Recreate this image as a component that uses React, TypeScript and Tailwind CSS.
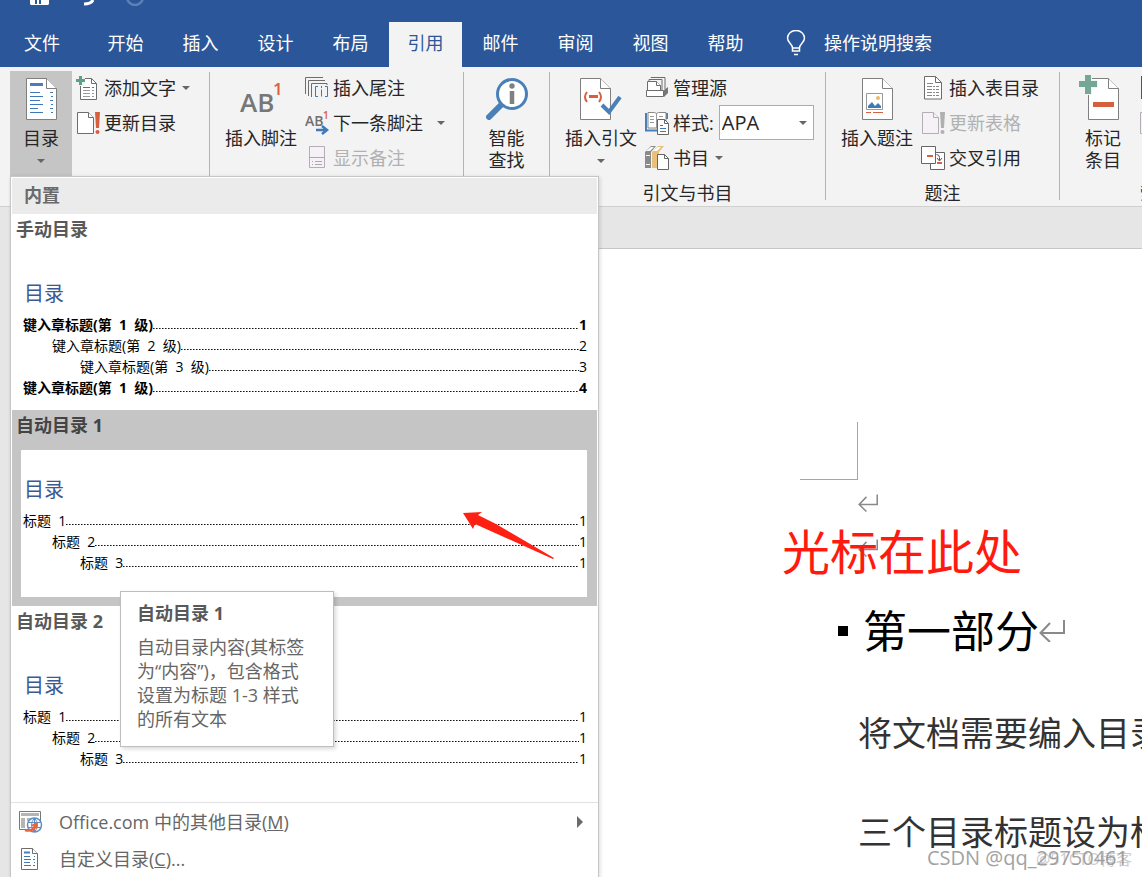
import type { ReactNode } from 'react';

const TABS = ['开始', '插入', '设计', '布局', '引用', '邮件', '审阅', '视图', '帮助'];

interface TocLine {
  text: string;
  page: number;
  level: number;
  bold?: boolean;
}

const MANUAL_LINES: TocLine[] = [
  { text: '键入章标题(第  1  级)', page: 1, level: 0, bold: true },
  { text: '键入章标题(第  2  级)', page: 2, level: 1 },
  { text: '键入章标题(第  3  级)', page: 3, level: 2 },
  { text: '键入章标题(第  1  级)', page: 4, level: 0, bold: true },
];

const AUTO_LINES: TocLine[] = [
  { text: '标题  1', page: 1, level: 0 },
  { text: '标题  2', page: 1, level: 1 },
  { text: '标题  3', page: 1, level: 2 },
];

const INDENTS = ['pl-0', 'pl-[29px]', 'pl-[57px]'];

function Caret() {
  return (
    <svg width="8" height="4" viewBox="0 0 8 4" className="shrink-0" aria-hidden="true">
      <path d="M0 0h8L4 4z" fill="#666" />
    </svg>
  );
}

function BigPage() {
  return (
    <g stroke="#7f7f7f" fill="#fff">
      <path d="M.5.5h20l10 10v31H.5z" />
      <path d="M20.5.5v10h10" />
    </g>
  );
}

function SmallPage({ muted = false }: { muted?: boolean }) {
  return (
    <g stroke={muted ? '#b5adb5' : '#6d6d6d'} fill={muted ? '#f6f1f7' : '#fff'}>
      <path d="M.5.5h11l5 5v16H.5z" />
      <path d="M11.5.5v5h5" />
    </g>
  );
}

function TocIcon() {
  return (
    <svg width="31" height="42" viewBox="0 0 31 42" aria-hidden="true">
      <BigPage />
      <path d="M4 6.500h13" stroke="#4a7ebb" strokeWidth="3" />
      <path
        d="M4 14.500h10M4 18.500h13M4 22.500h10M4 26.500h13M4 30.500h8M4 34.500h13M24 14.500h3M25 18.500h2M24 22.500h3M25 26.500h2M24 30.500h3M25 34.500h2"
        stroke="#3f78b5"
      />
    </svg>
  );
}

function FootnoteIcon() {
  return (
    <svg width="42" height="42" viewBox="0 0 42 42" aria-hidden="true" className="font-['Open_Sans',sans-serif]">
      <text x="0" y="34" fontSize="26" fontWeight="600" fill="#777">AB</text>
      <text x="33" y="17" fontSize="17" fontWeight="600" fill="#d9603f">1</text>
    </svg>
  );
}

function LookupIcon() {
  return (
    <svg width="42" height="42" viewBox="0 0 42 42" aria-hidden="true">
      <path d="M15 27L3 39" stroke="#4a80b8" strokeWidth="6" strokeLinecap="round" />
      <circle cx="26" cy="16" r="14.500" fill="#fff" stroke="#4a80b8" strokeWidth="3" />
      <circle cx="26" cy="8" r="2.700" fill="#808080" />
      <path d="M26 13v13" stroke="#808080" strokeWidth="4.500" />
    </svg>
  );
}

function CitationIcon() {
  return (
    <svg width="42" height="42" viewBox="0 0 42 42" aria-hidden="true">
      <BigPage />
      <path d="M7 14q-4 5 0 10M19 14q4 5 0 10" fill="none" stroke="#d65f3e" strokeWidth="2" />
      <path d="M9 18.500h9" stroke="#d65f3e" strokeWidth="3" />
      <path d="M22 27l7 7L40 19" fill="none" stroke="#4a80b8" strokeWidth="4" />
    </svg>
  );
}

function CaptionIcon() {
  return (
    <svg width="31" height="42" viewBox="0 0 31 42" aria-hidden="true">
      <BigPage />
      <path d="M4.500 15.500h16v16h-16z" fill="#fff" stroke="#999" />
      <path d="M6 30v-2l4-4 3 4 3-3 3 3v2z" fill="#3f7ab5" />
      <circle cx="16" cy="20" r="2" fill="#e8bd6b" />
      <path d="M4 34.500h5M11 34.500h10" stroke="#d65f3e" />
    </svg>
  );
}

function MarkEntryIcon() {
  return (
    <svg width="31" height="42" viewBox="0 0 31 42" className="overflow-visible" aria-hidden="true">
      <BigPage />
      <path d="M-9 6h19M0-3v20" stroke="#f3f3f3" strokeWidth="8" />
      <path d="M-9 6H9M0-3v19" stroke="#74a796" strokeWidth="6" />
      <path d="M5 26.500h21" stroke="#d65f3e" strokeWidth="5" />
    </svg>
  );
}

function SmallIcon({ children }: { children: ReactNode }) {
  return (
    <svg width="24" height="24" viewBox="0 0 24 24" fill="none" className="shrink-0" aria-hidden="true">
      {children}
    </svg>
  );
}

const addTextIcon = (
  <SmallIcon>
    <path d="M4.500 2.500h11l5 5v16h-16z" fill="#fff" stroke="#6d6d6d" />
    <path d="M15.500 2.500v5h5" stroke="#6d6d6d" />
    <path d="M0 0h9v10H0z" fill="#f3f3f3" />
    <path d="M0 4.500h9M4.500 0v9" stroke="#5f9f88" strokeWidth="3" />
    <path d="M7 11.500h7M16 11.500h2" stroke="#3f78b5" />
    <path d="M7 14.500h7M16 14.500h2M7 17.500h7M16 17.500h2M7 20.500h7M16 20.500h2" stroke="#9a9a9a" />
  </SmallIcon>
);

const updateIcon = (muted: boolean) => (
  <SmallIcon>
    <g transform="translate(1 1)">
      <SmallPage muted={muted} />
      <path d="M18 0h5l-1 16h-3z" fill={muted ? '#b0b0b0' : '#d65f3e'} />
      <circle cx="20.500" cy="20" r="2" fill={muted ? '#b0b0b0' : '#d65f3e'} />
    </g>
  </SmallIcon>
);

const endnoteIcon = (
  <SmallIcon>
    <path d="M.5 18V1.500H18M3.500 20V4.500H20M6.500 21V7.500H22V9" stroke="#6d6d6d" />
    <path d="M13 10.500h-2.500v10H13M20 10.500h2.500v10H20M16.500 13.500v7" stroke="#3f78b5" />
    <path d="M16.500 10v2" stroke="#3f78b5" />
  </SmallIcon>
);

const nextFootnoteIcon = (
  <SmallIcon>
    <g className="font-['Open_Sans',sans-serif]">
      <text x="0" y="15" fontSize="14" fontWeight="600" fill="#707070">AB</text>
      <text x="18" y="8" fontSize="10" fontWeight="600" fill="#d65f3e">1</text>
    </g>
    <path d="M11 19h10M17 15l5 4-5 4" stroke="#3f7ab8" strokeWidth="2.500" />
  </SmallIcon>
);

const showNotesIcon = (
  <SmallIcon>
    <path d="M4.500.5h15v21h-15z" fill="#f6f1f7" stroke="#b5adb5" />
    <path d="M4 11.500h16M7 15.500h1M10 15.500h7M7 18.500h1M10 18.500h7" stroke="#aaa" />
  </SmallIcon>
);

const manageIcon = (
  <SmallIcon>
    <path d="M6 2V1.500h14V13M4 5V3.500h13V14" stroke="#6d6d6d" />
    <path d="M2.500 14V5.500h9l4 4V14" fill="#fff" stroke="#6d6d6d" />
    <path d="M11.500 5.500v4h4M1.500 14.500h17v6h-17z" fill="#fff" stroke="#6d6d6d" />
    <path d="M19 14l4-3v6l-4 4z" fill="#777" />
  </SmallIcon>
);

const styleIcon = (
  <SmallIcon>
    <path d="M1 2v17.500H12M22 2v6" stroke="#4a80b8" strokeWidth="2" />
    <path d="M3 1.500h6.500l2 1 2-1H21V17H3z" fill="#fff" stroke="#888" />
    <path d="M11.500 2v15M5 5.500h4M5 8.500h4M5 11.500h4M14 5.500h4" stroke="#999" />
    <path d="M12.500 8.500h7l4 4v11h-11z" fill="#fff" stroke="#666" />
    <path d="M19.500 8.500v4h4" stroke="#666" />
    <path d="M15 14.500h3M15 17.500h6M15 20.500h6" stroke="#3f78b5" />
  </SmallIcon>
);

const bibliographyIcon = (
  <SmallIcon>
    <path d="M0 6l6-6h5L6 6v16H0z" fill="#8a8a8a" />
    <path d="M1 5l5-4h3L5 5zM1 9h4v1H1zM1 18h4v1H1z" fill="#fff" />
    <path d="M7 6l6-6h6l-5 6v16H7z" fill="#e8c07a" />
    <path d="M8 5l5-4h3l-4 4z" fill="#fff" />
    <path d="M12.500 8.500h7l4 4v11h-11z" fill="#fff" stroke="#666" />
    <path d="M19.500 8.500v4h4" stroke="#666" />
  </SmallIcon>
);

const figureTableIcon = (
  <SmallIcon>
    <g transform="translate(3 0)">
      <path d="M.5.5h11l6 6v16.500H.5z" fill="#fff" stroke="#6d6d6d" />
      <path d="M11.500.5v6h6" stroke="#6d6d6d" />
      <path d="M3 7.500h6" stroke="#888" />
      <path d="M3 10.500h12M3 13.500h12M3 16.500h12M3 19.500h12" stroke="#888" strokeDasharray="5 1 2 1" />
    </g>
  </SmallIcon>
);

const crossRefIcon = (
  <SmallIcon>
    <path d="M9.500 6.500h14v17h-14z" fill="#fff" stroke="#666" />
    <path d="M.5.500h14v17H.5z" fill="#fff" stroke="#666" />
    <path d="M6 10h6M16 17h5" stroke="#d65f3e" strokeWidth="2" />
    <path d="M15.500 8.500q3 0 3 3v3M16 12l2.500 3 2.500-3" stroke="#555" />
  </SmallIcon>
);

const indexIcon = (
  <SmallIcon>
    <path d="M2 0h20v23H2z" fill="#fff" />
    <path d="M2.500 0v23" stroke="#555" />
  </SmallIcon>
);

interface BigButtonProps {
  icon: ReactNode;
  lines: string[];
  arrow?: boolean;
  active?: boolean;
  narrow?: boolean;
}

function BigButton({ icon, lines, arrow, active, narrow }: BigButtonProps) {
  return (
    <button
      type="button"
      className={`flex h-full shrink-0 flex-col items-center pt-[7px] ${narrow ? 'w-[62px]' : 'w-[74px]'} ${
        active ? 'bg-[#c5c5c5]' : ''
      }`}
    >
      {icon}
      <span className="mt-[7px] flex flex-col whitespace-nowrap leading-[22px]">
        {lines.map((line) => (
          <span key={line}>{line}</span>
        ))}
      </span>
      {arrow && (
        <span className="mt-[10px]">
          <Caret />
        </span>
      )}
    </button>
  );
}

function ButtonStack({ children }: { children: ReactNode }) {
  return <div className="-mt-px flex flex-col">{children}</div>;
}

interface SmallButtonProps {
  icon: ReactNode;
  label?: string;
  arrow?: 'near' | 'far';
  disabled?: boolean;
}

function SmallButton({ icon, label, arrow, disabled }: SmallButtonProps) {
  return (
    <button
      type="button"
      disabled={disabled}
      className="flex h-[35px] items-center gap-1 whitespace-nowrap disabled:text-[#b1b1b1]"
    >
      {icon}
      {label && <span>{label}</span>}
      {arrow && (
        <span className={arrow === 'far' ? 'ml-[10px]' : 'ml-[2px]'}>
          <Caret />
        </span>
      )}
    </button>
  );
}

interface GroupProps {
  children: ReactNode;
  label?: string;
  className: string;
}

function Group({ children, label, className }: GroupProps) {
  return (
    <section className="flex shrink-0">
      <div className={`flex flex-col ${className}`}>
        <div className="flex h-[105px]">{children}</div>
        {label && <h2 className="mt-[5px] text-center leading-6">{label}</h2>}
      </div>
      <div className="mt-px mb-[6px] w-px bg-[#b4b4b4]" />
    </section>
  );
}

function TitleBar() {
  return (
    <header className="shrink-0 bg-[#2b579a] text-white">
      <div className="h-[22px] pl-[30px]">
        <svg width="120" height="6" viewBox="0 0 120 6" fill="none" aria-hidden="true">
          <path d="M0 0h5v4h2V0h2v4h2V0h8v4l-1 1H1L0 4z" fill="#fff" />
          <path d="M63 0q-2 4-9 4" stroke="#fff" strokeWidth="3" />
          <path d="M97-3a8 8 0 0 0 16 0" stroke="#5d80b6" strokeWidth="2.500" />
        </svg>
      </div>
      <nav className="flex h-[45px] gap-[2px] whitespace-nowrap pl-[5px]">
        <button type="button" className="w-[74px] pb-[3px]">文件</button>
        <div className="ml-2 flex gap-[2px]">
          {TABS.map((tab) => (
            <button
              key={tab}
              type="button"
              className={`w-[73px] pb-[3px] ${tab === '引用' ? 'bg-[#f3f3f3] text-[#2b579a]' : ''}`}
            >
              {tab}
            </button>
          ))}
        </div>
        <button type="button" className="ml-[22px] flex items-center gap-[18px] pb-[3px]">
          <svg width="20" height="26" viewBox="0 0 20 26" fill="none" stroke="#fff" strokeWidth="1.500" aria-hidden="true">
            <path d="M6.500 18c0-4-5-5-5-10a8.500 7.500 0 0 1 17 0c0 5-5 6-5 10zM6.500 18v3h7v-3M8 24.500h4" />
          </svg>
          <span>操作说明搜索</span>
        </button>
      </nav>
    </header>
  );
}

function Ribbon() {
  return (
    <div className="flex h-[140px] shrink-0 overflow-hidden border-b border-[#d0d0d0] bg-[#f3f3f3] pt-1 text-[#262626]">
      <Group className="w-[209px] pl-[10px]">
        <BigButton icon={<TocIcon />} lines={['目录']} arrow active narrow />
        <div className="ml-1">
          <ButtonStack>
            <SmallButton icon={addTextIcon} label="添加文字" arrow="near" />
            <SmallButton icon={updateIcon(false)} label="更新目录" />
          </ButtonStack>
        </div>
      </Group>
      <Group className="w-[253px] pl-[14px]">
        <BigButton icon={<FootnoteIcon />} lines={['插入脚注']} />
        <div className="ml-[7px]">
          <ButtonStack>
            <SmallButton icon={endnoteIcon} label="插入尾注" />
            <SmallButton icon={nextFootnoteIcon} label="下一条脚注" arrow="far" />
            <SmallButton icon={showNotesIcon} label="显示备注" disabled />
          </ButtonStack>
        </div>
      </Group>
      <Group className="w-[85px] items-center">
        <BigButton icon={<LookupIcon />} lines={['智能', '查找']} />
      </Group>
      <Group className="w-[275px]" label="引文与书目">
        <div className="flex pl-[14px]">
          <BigButton icon={<CitationIcon />} lines={['插入引文']} arrow />
          <div className="ml-[7px]">
            <ButtonStack>
              <SmallButton icon={manageIcon} label="管理源" />
              <div className="flex h-[35px] items-center gap-1">
                {styleIcon}
                <label htmlFor="citation-style">样式:</label>
                <span className="relative ml-px">
                  <select
                    id="citation-style"
                    defaultValue="APA"
                    className="block h-[35px] w-[95px] appearance-none border border-[#ababab] bg-white pl-[2px] text-xl text-[#262626]"
                  >
                    <option>APA</option>
                  </select>
                  <span className="pointer-events-none absolute inset-y-0 right-[7px] flex items-center">
                    <Caret />
                  </span>
                </span>
              </div>
              <SmallButton icon={bibliographyIcon} label="书目" arrow="near" />
            </ButtonStack>
          </div>
        </div>
      </Group>
      <Group className="w-[233px]" label="题注">
        <div className="flex pl-[14px]">
          <BigButton icon={<CaptionIcon />} lines={['插入题注']} />
          <div className="ml-[7px]">
            <ButtonStack>
              <SmallButton icon={figureTableIcon} label="插入表目录" />
              <SmallButton icon={updateIcon(true)} label="更新表格" disabled />
              <SmallButton icon={crossRefIcon} label="交叉引用" />
            </ButtonStack>
          </div>
        </div>
      </Group>
      <Group className="w-[196px]" label="索引">
        <div className="flex pl-3">
          <BigButton icon={<MarkEntryIcon />} lines={['标记', '条目']} narrow />
          <div className="ml-[5px]">
            <ButtonStack>
              <SmallButton icon={indexIcon} />
              <SmallButton icon={updateIcon(true)} disabled />
            </ButtonStack>
          </div>
        </div>
      </Group>
    </div>
  );
}

function GalleryItem({ name, lines, selected }: { name: string; lines: TocLine[]; selected?: boolean }) {
  return (
    <button
      type="button"
      className={`flex h-[196px] w-full flex-col pr-[10px] pb-[9px] pl-1 text-left ${
        selected ? 'bg-[#c5c5c5] text-[#444]' : 'text-[#595959]'
      }`}
    >
      <span className="flex h-10 pt-[3px] font-bold leading-6">{name}</span>
      <span className="flex w-full grow flex-col pl-[5px]">
        <span className="flex grow flex-col bg-white pl-[2px] pt-7 text-black">
          <span className="ml-px text-xl leading-6 text-[#3b5a92]">目录</span>
          <span className="mt-2 flex flex-col">
            {lines.map((line, i) => (
              <span
                key={i}
                className={`flex h-[21px] items-center whitespace-pre text-sm leading-5 ${INDENTS[line.level]} ${
                  line.bold ? 'font-bold' : ''
                }`}
              >
                {line.text}
                <span className="mt-2 h-px grow bg-[repeating-linear-gradient(90deg,#111_0_1px,#777_1px_2px,transparent_2px_3px)]" />
                {line.page}
              </span>
            ))}
          </span>
        </span>
      </span>
    </button>
  );
}

function TocMenu() {
  return (
    <div className="absolute top-[176px] left-[10px] z-10 w-[589px] border border-[#c6c6c6] bg-white shadow-[1px_1px_4px_rgba(0,0,0,0.15)]">
      <h2 className="m-px mb-0 flex h-9 items-center bg-[#ebebeb] pb-[2px] pl-3 font-bold text-[#6a6a6a]">内置</h2>
      <div className="relative px-px">
        <GalleryItem name="手动目录" lines={MANUAL_LINES} />
        <GalleryItem name="自动目录 1" lines={AUTO_LINES} selected />
        <GalleryItem name="自动目录 2" lines={AUTO_LINES} />
        <svg
          className="absolute top-[298px] left-[452px]"
          width="92"
          height="48"
          viewBox="0 0 92 48"
          aria-hidden="true"
        >
          <path d="M0 1L19 0l-4 3 18 9 58 34-1 1-40-18L12 12l-2 5z" fill="#ff2014" />
        </svg>
        <div
          role="tooltip"
          className="absolute top-[377px] left-[109px] w-[214px] whitespace-nowrap border border-[#bebebe] bg-white px-4 pt-[9px] pb-[15px] leading-6 text-[#666] shadow-[2px_2px_4px_rgba(0,0,0,0.15)]"
        >
          <strong className="block text-[#595959]">自动目录 1</strong>
          <p className="mt-[10px]">
            自动目录内容(其标签
            <br />
            为“内容”)，包含格式
            <br />
            设置为标题 1-3 样式
            <br />
            的所有文本
          </p>
        </div>
      </div>
      <div className="border-t border-[#e1e1e6] text-[#666]">
        <button type="button" className="flex h-[38px] w-full items-center pl-2 pr-[15px]">
          <svg width="24" height="24" viewBox="0 0 24 24" fill="none" aria-hidden="true">
            <path d="M.5 1.500h21v18H.5z" fill="#fff" stroke="#777" />
            <path d="M2 3h18v3H2zM2 8h4v10H2zM8 8h11v3H8z" fill="#b5b5b5" />
            <circle cx="15.500" cy="15" r="7" fill="#fff" stroke="#5b8fc7" strokeWidth="1.500" />
            <path d="M9 12.500h13M9 17.500h13M15.500 8v14M15.500 8q-6 7 0 14M15.500 8q6 7 0 14" stroke="#5b8fc7" />
            <path d="M6 20q7 2 11-4" stroke="#f0623a" strokeWidth="2.500" />
            <path d="M12 15l7-3-1 7z" fill="#f0623a" />
          </svg>
          <span className="ml-4">
            Office.com 中的其他目录(<u>M</u>)
          </span>
          <svg className="ml-auto" width="6" height="12" viewBox="0 0 6 12" aria-hidden="true">
            <path d="M0 0l6 6-6 6z" fill="#6b6b6b" />
          </svg>
        </button>
        <button type="button" className="flex h-9 w-full items-center pb-px pl-2">
          <svg width="24" height="24" viewBox="0 0 24 24" fill="none" aria-hidden="true">
            <g transform="translate(2 1)">
              <SmallPage />
              <path d="M3 4.500h6" stroke="#4a7ebb" strokeWidth="2" />
              <path d="M3 8.500h6M3 11.500h7M3 14.500h6M3 17.500h7M13 8.500h1M12 11.500h2M13 14.500h1M12 17.500h2" stroke="#3f78b5" />
            </g>
          </svg>
          <span className="ml-4">
            自定义目录(<u>C</u>)...
          </span>
        </button>
      </div>
    </div>
  );
}

function ReturnMark({ large = false }: { large?: boolean }) {
  return (
    <svg
      width={large ? 26 : 20}
      height={large ? 22 : 18}
      viewBox="0 0 26 22"
      fill="none"
      stroke="#8a8a8a"
      strokeWidth="2"
      className="shrink-0"
      aria-hidden="true"
    >
      <path d="M25 0v13H2M11 3L1.500 13l9.500 9" />
    </svg>
  );
}

function Document() {
  return (
    <main className="relative grow overflow-hidden bg-[#e6e6e6] pt-[41px] pl-[300px]">
      <article className="relative h-full overflow-hidden border-t border-[#c6c6c6] bg-white pl-[500px] pt-[173px]">
        <div className="h-[58px] w-[58px] border-r border-b border-[#a6a6a6]" />
        <div className="pl-[58px] text-[#333]">
          <div className="pt-[14px]">
            <ReturnMark />
          </div>
          <div className="pt-[27px]">
            <ReturnMark />
          </div>
          <h1 className="-ml-5 mt-9 flex h-[76px] items-center whitespace-nowrap font-['KaiTi','Noto_Sans_CJK_SC',sans-serif] text-[44px] text-black">
            <span className="mr-[15px] h-[10px] w-[10px] bg-black" />
            <span className="pb-[3px]">第一部分</span>
            <ReturnMark large />
          </h1>
          <p className="mt-[38px] whitespace-nowrap text-[34px] leading-[52px]">将文档需要编入目录</p>
          <p className="mt-[47px] whitespace-nowrap text-[34px] leading-[52px]">三个目录标题设为标</p>
        </div>
        <span className="absolute top-[267px] left-[482px] whitespace-nowrap text-[48px] leading-[72px] text-[#ff1a10]">
          光标在此处
        </span>
      </article>
      <span className="absolute right-[10px] bottom-[6px] text-base leading-6 text-[#b9b9b9] opacity-70">@51CTO博客</span>
      <span className="absolute right-[14px] bottom-[7px] text-xl leading-6 text-[#8c8c8c] opacity-80">
        CSDN @qq_29750461
      </span>
    </main>
  );
}

export default function App() {
  return (
    <div className="relative flex h-screen flex-col overflow-hidden bg-[#e6e6e6] font-['Open_Sans','Noto_Sans_CJK_SC',sans-serif] text-lg">
      <TitleBar />
      <Ribbon />
      <Document />
      <TocMenu />
    </div>
  );
}
